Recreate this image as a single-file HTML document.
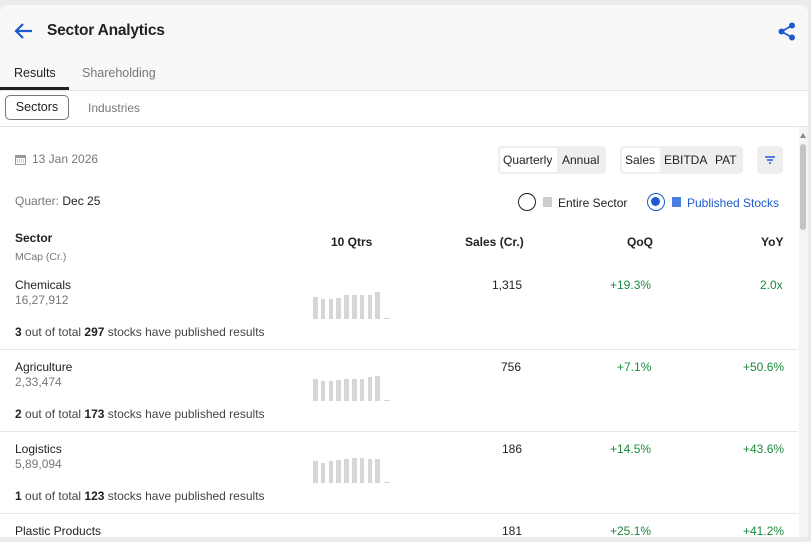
<!DOCTYPE html>
<html><head><style>
*{box-sizing:border-box;margin:0;padding:0}
html,body{width:811px;height:542px;overflow:hidden}
body{background:#ebebeb;font-family:"Liberation Sans",sans-serif;position:relative;color:#222}
.card{position:absolute;left:0;top:5px;width:808px;height:532px;background:#fff;border-radius:8px 8px 0 0;overflow:hidden}
.hdr{position:absolute;left:0;top:0;width:808px;height:86px;background:#f8f8f9;border-bottom:1px solid #e4e4e4}
.abs{position:absolute;white-space:nowrap}
.title{left:47px;top:17px;font-size:15.5px;font-weight:bold;color:#222;letter-spacing:-0.2px}
.tab{font-size:12.5px;top:61px}
.sub{position:absolute;left:0;top:86px;width:808px;height:36px;border-bottom:1px solid #e4e4e4}
.g{color:#777}
.seg{position:absolute;background:#eeeeef;border-radius:4px;height:28px;font-size:12px}
.seg span{position:absolute;top:7px}
.bars{position:absolute;height:30px;width:80px}
.bars i{position:absolute;bottom:0;width:4.5px;background:#d6d6d6}
.row{position:absolute;left:0;width:798px;border-bottom:1px solid #e6e6e6;height:82px}
.green{color:#1b8a3e}
.f13{font-size:12px}
</style></head><body>
<div class="card">
<div class="hdr">
<svg class="abs" style="left:14px;top:17px" width="20" height="18" viewBox="0 0 20 18"><path d="M18 9H3M9 2L2 9l7 7" stroke="#1e5bd0" stroke-width="2.2" fill="none"/></svg>
<div class="abs title">Sector Analytics</div>
<svg class="abs" style="left:778px;top:17px" width="18" height="19" viewBox="0 0 18 19"><circle cx="14" cy="3.5" r="3" fill="#1e5bd0"/><circle cx="3.5" cy="9.5" r="3" fill="#1e5bd0"/><circle cx="14" cy="15.5" r="3" fill="#1e5bd0"/><path d="M14 3.5L3.5 9.5 14 15.5" stroke="#1e5bd0" stroke-width="1.8" fill="none"/></svg>
<div class="abs tab" style="left:14px;color:#222">Results</div>
<div class="abs tab g" style="left:82px">Shareholding</div>
<div class="abs" style="left:0;top:82px;width:69px;height:3px;background:#222"></div>
</div>
<div class="sub">
<div class="abs" style="left:5px;top:4px;width:64px;height:25px;border:1px solid #777;border-radius:5px;font-size:12.5px;text-align:center;line-height:23px">Sectors</div>
<div class="abs g f13" style="left:88px;top:10px">Industries</div>
</div>
<svg class="abs" style="left:15px;top:149px" width="11" height="11" viewBox="0 0 11 11"><rect x="0.5" y="1.5" width="10" height="9" fill="none" stroke="#999"/><rect x="0.5" y="1.5" width="10" height="2.5" fill="#999"/><path d="M2 6h7M2 8h7" stroke="#999" stroke-dasharray="1 1"/></svg>
<div class="abs g f13" style="left:32px;top:147px">13 Jan 2026</div>
<div class="seg" style="left:498px;top:141px;width:108px"><div class="abs" style="left:2px;top:2px;width:57px;height:24px;background:#fff;border-radius:3px"></div><span style="left:5px">Quarterly</span><span style="left:64px">Annual</span></div>
<div class="seg" style="left:620px;top:141px;width:123px"><div class="abs" style="left:2px;top:2px;width:38px;height:24px;background:#fff;border-radius:3px"></div><span style="left:5px">Sales</span><span style="left:44px">EBITDA</span><span style="left:95px">PAT</span></div>
<div class="seg" style="left:757px;top:141px;width:26px"><svg class="abs" style="left:7px;top:10px" width="12" height="9"><path d="M1 1h10M3 4h6M5 7h2" stroke="#1e5bd0" stroke-width="1.4"/></svg></div>
<div class="abs f13" style="left:15px;top:189px"><span class="g">Quarter:</span> Dec 25</div>
<div class="abs" style="left:518px;top:188px;width:18px;height:18px;border:1.5px solid #222;border-radius:50%"></div>
<div class="abs" style="left:543px;top:192px;width:9px;height:10px;background:#ccc"></div>
<div class="abs f13" style="left:558px;top:191px">Entire Sector</div>
<div class="abs" style="left:647px;top:188px;width:18px;height:18px;border:1.5px solid #1e5bd0;border-radius:50%"><div style="position:absolute;left:3px;top:3px;width:9px;height:9px;border-radius:50%;background:#1e5bd0"></div></div>
<div class="abs" style="left:672px;top:192px;width:9px;height:10px;background:#4a7fe0"></div>
<div class="abs f13" style="left:687px;top:191px;color:#1e5bd0">Published Stocks</div>
<div class="abs f13" style="left:15px;top:226px;font-weight:bold">Sector</div>
<div class="abs g" style="left:15px;top:246px;font-size:10.5px">MCap (Cr.)</div>
<div class="abs f13" style="left:331px;top:230px;font-weight:bold">10 Qtrs</div>
<div class="abs f13" style="left:465px;top:230px;font-weight:bold">Sales (Cr.)</div>
<div class="abs f13" style="left:627px;top:230px;font-weight:bold">QoQ</div>
<div class="abs f13" style="left:761px;top:230px;font-weight:bold">YoY</div>

<div class="row" style="top:263px">
<div class="abs f13" style="left:15px;top:10px">Chemicals</div><div class="abs g f13" style="left:15px;top:25px">16,27,912</div>
<div class="abs f13" style="left:492px;top:10px">1,315</div><div class="abs f13 green" style="left:610px;top:10px">+19.3%</div><div class="abs f13 green" style="left:760px;top:10px">2.0x</div>
<div class="abs f13" style="left:15px;top:57px;color:#444"><b style="color:#222">3</b> out of total <b style="color:#222">297</b> stocks have published results</div>
</div>
<div class="row" style="top:345px">
<div class="abs f13" style="left:15px;top:10px">Agriculture</div><div class="abs g f13" style="left:15px;top:25px">2,33,474</div>
<div class="abs f13" style="left:501px;top:10px">756</div><div class="abs f13 green" style="left:617px;top:10px">+7.1%</div><div class="abs f13 green" style="left:743px;top:10px">+50.6%</div>
<div class="abs f13" style="left:15px;top:57px;color:#444"><b style="color:#222">2</b> out of total <b style="color:#222">173</b> stocks have published results</div>
</div>
<div class="row" style="top:427px">
<div class="abs f13" style="left:15px;top:10px">Logistics</div><div class="abs g f13" style="left:15px;top:25px">5,89,094</div>
<div class="abs f13" style="left:502px;top:10px">186</div><div class="abs f13 green" style="left:610px;top:10px">+14.5%</div><div class="abs f13 green" style="left:743px;top:10px">+43.6%</div>
<div class="abs f13" style="left:15px;top:57px;color:#444"><b style="color:#222">1</b> out of total <b style="color:#222">123</b> stocks have published results</div>
</div>
<div class="row" style="top:509px;border:none;height:23px">
<div class="abs f13" style="left:15px;top:10px">Plastic Products</div>
<div class="abs f13" style="left:502px;top:10px">181</div><div class="abs f13 green" style="left:610px;top:10px">+25.1%</div><div class="abs f13 green" style="left:743px;top:10px">+41.2%</div>
</div>

<div class="bars" style="left:313px;top:284px"><i style="left:0;height:22px"></i><i style="left:7.8px;height:20px"></i><i style="left:15.6px;height:20px"></i><i style="left:23.4px;height:21px"></i><i style="left:31.2px;height:24px"></i><i style="left:39px;height:24px"></i><i style="left:46.8px;height:24px"></i><i style="left:54.6px;height:24px"></i><i style="left:62.4px;height:27px"></i><i style="left:71px;height:1px;width:6px"></i></div>
<div class="bars" style="left:313px;top:366px"><i style="left:0;height:22px"></i><i style="left:7.8px;height:20px"></i><i style="left:15.6px;height:20px"></i><i style="left:23.4px;height:21px"></i><i style="left:31.2px;height:22px"></i><i style="left:39px;height:22px"></i><i style="left:46.8px;height:22px"></i><i style="left:54.6px;height:24px"></i><i style="left:62.4px;height:25px"></i><i style="left:71px;height:1px;width:6px"></i></div>
<div class="bars" style="left:313px;top:448px"><i style="left:0;height:22px"></i><i style="left:7.8px;height:20px"></i><i style="left:15.6px;height:22px"></i><i style="left:23.4px;height:23px"></i><i style="left:31.2px;height:24px"></i><i style="left:39px;height:25px"></i><i style="left:46.8px;height:25px"></i><i style="left:54.6px;height:24px"></i><i style="left:62.4px;height:24px"></i><i style="left:71px;height:1px;width:6px"></i></div>

<div class="abs" style="left:799px;top:122px;width:9px;height:410px;background:#f4f4f4"></div>
<div class="abs" style="left:800px;top:128px;width:0;height:0;border-left:3.5px solid transparent;border-right:3.5px solid transparent;border-bottom:5px solid #888"></div>
<div class="abs" style="left:800px;top:139px;width:6px;height:86px;background:#c4c4c4;border-radius:3px"></div>
</div>
</body></html>
